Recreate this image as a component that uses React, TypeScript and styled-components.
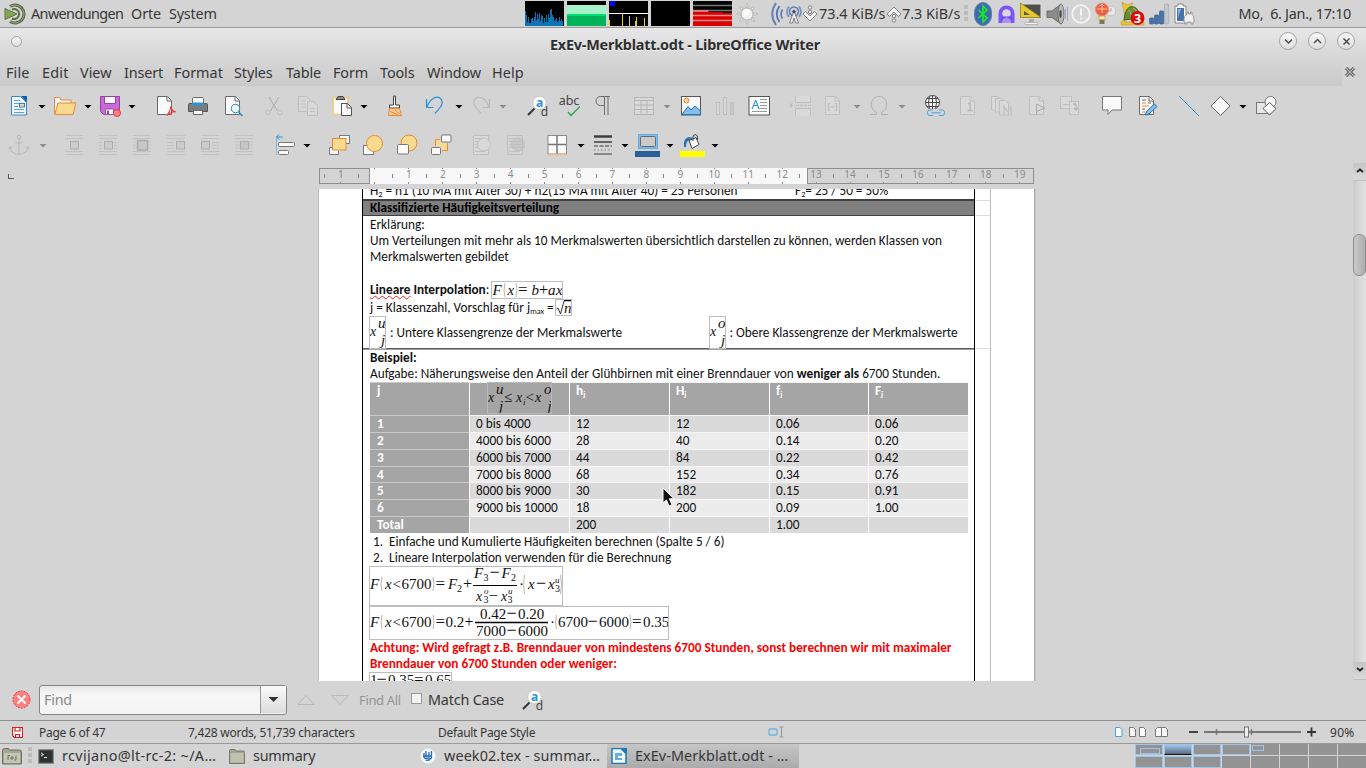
import React from 'react';
import styled, { createGlobalStyle, css } from 'styled-components';

const GlobalStyle = createGlobalStyle`
  * { box-sizing: border-box; }
  body { margin: 0; background: #d4d4d4; overflow: hidden; }
  svg { display: block; flex: none; }
`;

const Desktop = styled.div`
  width: 1366px;
  height: 768px;
  display: flex;
  flex-direction: column;
  background: #d4d4d4;
  color: #363636;
  font: 14.4px 'Noto Sans', sans-serif;
  overflow: hidden;
  position: relative;
`;

const Label = styled.span<{ $ls?: number; $ml?: number; $w?: number }>`
  white-space: pre;
  flex: none;
  letter-spacing: ${(p) => p.$ls ?? 0}px;
  margin-left: ${(p) => p.$ml ?? 0}px;
  ${(p) => p.$w && css`width: ${p.$w}px;`}
`;

const DimLabel = styled(Label)`
  color: #949494;
  font-size: 13px;
`;

const Slot = styled.div<{ $gap: number; $w?: number; $h?: number }>`
  flex: none;
  margin-left: ${(p) => p.$gap}px;
  width: ${(p) => p.$w ?? 22}px;
  height: ${(p) => p.$h ?? 22}px;
  display: flex;
  align-items: center;
  justify-content: center;
`;

/* ---------- desktop panel ---------- */

const Panel = styled.header`
  height: 28px;
  flex: none;
  display: flex;
  align-items: center;
  border-bottom: 1px solid #999;
`;

const Monitor = styled.div<{ $first?: boolean }>`
  flex: none;
  width: 39px;
  height: 25px;
  margin-left: ${(p) => (p.$first ? 307 : 3)}px;
  background: #000;
`;

const cpu = [15, 11, 4, 9, 3, 3, 7, 8, 5, 9, 14, 6, 12, 7, 13, 5, 11, 10, 3, 8, 4, 11, 4, 12, 8, 16, 17, 11, 9, 5, 6, 8, 4, 5, 9, 5, 7, 5];

const CpuGraph = () => (
  <svg width="39" height="25">
    {cpu.map((h, i) => <rect key={i} x={i} y={25 - h} width="1" height={h} fill="#0a74b8" />)}
  </svg>
);

const MateLogo = () => (
  <svg width="22" height="22" viewBox="0 0 22 22" fill="none">
    <path d="M6 3.500A9 9 0 1 1 6 18.500" stroke="#556b42" strokeWidth="3.2" />
    <path d="M6 3.500A9 9 0 1 1 6 18.500" stroke="#a9b79c" strokeWidth=".8" />
    <path d="M8 6.500A5 5 0 1 1 8 15.500" stroke="#556b42" strokeWidth="2" />
    <path d="M1 5.500L13 11L1 16.500z" fill="#87a556" stroke="#5a7541" />
  </svg>
);

const Sun = () => (
  <svg width="22" height="22" viewBox="0 0 22 22">
    {[0, 45, 90, 135, 180, 225, 270, 315].map((a) => (
      <path key={a} d="M11 .5L12.500 4h-3z" fill="#eee" stroke="#aaa" strokeWidth=".6" transform={`rotate(${a} 11 11)`} />
    ))}
    <circle cx="11" cy="11" r="6" fill="#f1f1ee" stroke="#b5b5b0" />
    <circle cx="10" cy="9.500" r="3" fill="#fff" />
  </svg>
);

const Waves = () => (
  <svg width="16" height="26" viewBox="0 0 16 26" fill="none" stroke="#5576ae">
    <path d="M6 2Q-1.500 13 6 24" strokeWidth="2" opacity=".85" />
    <path d="M9.500 5Q4 13 9.500 21" strokeWidth="1.800" />
    <path d="M12.500 8.500Q9.500 13 12.500 17.500" strokeWidth="1.600" />
  </svg>
);

const Antenna = () => (
  <svg width="18" height="22" viewBox="0 0 18 22" fill="none">
    <path d="M4 3.500Q0 9 4 14M14 3.500Q18 9 14 14" stroke="#7d95bd" strokeWidth="1.800" />
    <circle cx="9" cy="8.500" r="4.500" fill="#c5d0e4" stroke="#5a7cb4" strokeWidth="1.500" />
    <path d="M9 8L4.500 20h3L9 15l1.500 5h3z" fill="#eee" stroke="#777" strokeWidth=".9" />
    <circle cx="9" cy="8.500" r="1.600" fill="#444" />
  </svg>
);

const NetArrow = ({ up }: { up?: boolean }) => (
  <svg width="16" height="18" viewBox="0 0 16 18">
    <g transform={up ? 'rotate(180 8 9)' : undefined} fill="#f5f5f5" stroke="#777" strokeWidth=".9">
      <path d="M1 9l2.500-2.500L8 11l4.500-4.500L15 9l-7 7z" />
      <circle cx="8" cy="2.500" r="1.700" />
      <circle cx="8" cy="7" r="1.700" />
    </g>
  </svg>
);

const Grip = styled.div<{ $ml: number }>`
  flex: none;
  width: 4px;
  height: 18px;
  margin-left: ${(p) => p.$ml}px;
  background: repeating-linear-gradient(#bcbcbc 0 4px, transparent 4px 6px);
`;

const Bluetooth = () => (
  <svg width="18" height="24" viewBox="0 0 18 24">
    <rect x=".5" y=".5" width="17" height="23" rx="8.500" ry="10" fill="#3d6cad" stroke="#5f7fae" />
    <path d="M4.500 8l8.500 8-4 4V4l4 4-8.500 8" fill="none" stroke="#12f01b" strokeWidth="1.700" />
  </svg>
);

const VpnIcon = () => (
  <svg width="17" height="18" viewBox="0 0 17 18">
    <path d="M.5 8.500a8 8 0 0 1 16 0V18H.5z" fill="#7a55f2" />
    <circle cx="8.500" cy="8.500" r="4.300" fill="#d9d4e6" />
    <path d="M4 18q0-5 4.500-5t4.500 5z" fill="#a892f5" />
    <path d="M5 11.500h7l1.500 3a8 8 0 0 0-10 0z" fill="#6a45ea" />
  </svg>
);

const ScreenIcon = () => (
  <svg width="24" height="24" viewBox="0 0 24 24">
    <rect x="1" y="2" width="21" height="14.500" rx="1" fill="#4c4f4c" stroke="#ddd" />
    <rect x="10" y="17" width="5" height="3" fill="#aaa" />
    <path d="M6 20.500h13v2H6z" fill="#f4f4f4" stroke="#999" strokeWidth=".6" />
    <path d="M1.500 1v14.500H22z" fill="#e5c92e" stroke="#9b8616" strokeWidth=".8" />
    <path d="M5 9v4h6z" fill="#585a4e" />
  </svg>
);

const Speaker = () => (
  <svg width="24" height="24" viewBox="0 0 24 24">
    <path d="M2 9h5L16 2v20L7 15.500H2z" fill="#8b8d89" stroke="#5b5d5a" strokeWidth=".8" />
    <ellipse cx="16" cy="12" rx="3" ry="10" fill="#b9bab6" stroke="#666" strokeWidth=".8" />
    <ellipse cx="15.500" cy="12" rx="1.300" ry="4" fill="#555" />
    <path d="M20.500 7v10M22.500 5v14" stroke="#9aa6cc" strokeWidth=".9" />
  </svg>
);

const Notice = () => (
  <svg width="20" height="20" viewBox="0 0 20 20">
    <circle cx="10" cy="10" r="8.800" fill="none" stroke="#f4f4f4" strokeWidth="1.800" />
    <path d="M10 4.500v7M10 13.500v2" stroke="#f4f4f4" strokeWidth="2" />
  </svg>
);

const Bulb = () => (
  <svg width="22" height="24" viewBox="0 0 22 24">
    <circle cx="17" cy="9" r="4.800" fill="#e8e8e8" stroke="#c4c4c4" />
    <path d="M17 6v3h-2.500" stroke="#aaa" fill="none" />
    <circle cx="8" cy="7.500" r="6.500" fill="#f2603c" stroke="#d88" />
    <path d="M3 7h10M6 4l2-2 2 2M8 2v9" stroke="#ffc2b0" fill="none" />
    <path d="M5 14h6v3.500H5z" fill="#ffe9a0" stroke="#a68a40" strokeWidth=".6" />
    <path d="M5.500 18h5v4h-5z" fill="#777c5a" />
  </svg>
);

const Updates = () => (
  <svg width="25" height="25" viewBox="0 0 25 25">
    <path d="M2 1l5 3 6-2-5 6-1 8-3 5H24v3H1v-3l4-4z" fill="#e6c53a" stroke="#c49a1e" strokeWidth=".6" />
    <path d="M4 19Q5 6 12 5.500Q19 6 20 17z" fill="#6b8c38" stroke="#41631d" />
    <path d="M8 9q4 2 3 8M13 7q4 2 5 6" stroke="#a6bf66" fill="none" />
    <circle cx="17.500" cy="17" r="7" fill="#dd0a0a" />
    <text x="17.500" y="21.500" fontSize="12.500" fontWeight="bold" fontFamily="Noto Sans, sans-serif" textAnchor="middle" fill="#fff">3</text>
  </svg>
);

const Signal = () => (
  <svg width="21" height="22" viewBox="0 0 21 22">
    {[[0, 15, 6], [5, 12, 9], [10, 8, 13], [15, 1, 20]].map(([x, y, h]) => (
      <rect key={x} x={x + 0.5} y={y} width="4.200" height={h} rx="1" fill={x === 15 ? '#c3c6cb' : '#4673ac'} stroke={x === 15 ? '#a4a7ac' : '#3a5f92'} strokeWidth=".7" />
    ))}
  </svg>
);

const Battery = () => (
  <svg width="22" height="22" viewBox="0 0 22 22">
    <path d="M2 3h3V1h5v2h3v17H2z" fill="#fdfdfd" stroke="#888" />
    <rect x="4" y="5" width="7" height="13" fill="#4673ac" />
    <path d="M5 6h3l-3 9z" fill="#8db0dd" />
    <path d="M11 16q0-4 3-4.500V9h1.500v2h2V9H19v2.500q2 1 2 4.500v3h-1v2h-2v-2h-4v2h-2v-2h-1z" fill="#f0f0f0" stroke="#8a8a8a" strokeWidth=".8" />
  </svg>
);

/* ---------- window chrome ---------- */

const Chrome = styled.div`
  height: 58px;
  flex: none;
  background: linear-gradient(#e7e7e7, #d5d5d5 55%, #cacaca);
`;

const TitleBar = styled.div`
  height: 32px;
  display: flex;
  align-items: center;
`;

const Title = styled.div`
  width: 271px;
  margin: 1px 459px 0 505px;
  font-weight: bold;
  letter-spacing: -0.215px;
  white-space: nowrap;
  color: #2f2f2f;
  text-shadow: 0 1px #f4f4f4;
`;

const RoundButton = styled.div<{ $size: number; $ml: number }>`
  width: ${(p) => p.$size}px;
  height: ${(p) => p.$size}px;
  margin-left: ${(p) => p.$ml}px;
  margin-top: -6px;
  border: 1px solid #a4a4a4;
  border-radius: 50%;
  background: linear-gradient(#fafafa, #dcdcdc);
  flex: none;
  display: flex;
  align-items: center;
  justify-content: center;
`;

const MenuBar = styled.nav`
  height: 26px;
  display: flex;
  align-items: center;
  padding-bottom: 1px;
`;

const MenuClose = styled.div`
  width: 24px;
  margin-left: auto;
  height: 26px;
  background: #d4d4d4;
  display: flex;
  align-items: center;
  justify-content: center;
  padding: 0 8px 2px 0;
`;

const menus: [string, number, number][] = [
  ['File', 36, 0.12], ['Edit', 38, 0.2], ['View', 44, 0], ['Insert', 50, -0.15], ['Format', 60, 0],
  ['Styles', 52, -0.1], ['Table', 47, -0.1], ['Form', 47, -0.1], ['Tools', 47, -0.1], ['Window', 65, -0.1], ['Help', 40, 0.1],
];

/* ---------- toolbars ---------- */

const Toolbar = styled.div<{ $h: number; $pb?: number }>`
  height: ${(p) => p.$h}px;
  flex: none;
  display: flex;
  align-items: center;
  padding-bottom: ${(p) => p.$pb ?? 0}px;
`;

const Arrow = styled.i<{ $gap: number; $dim?: boolean }>`
  flex: none;
  margin: 1px 0 0 ${(p) => p.$gap}px;
  width: 8px;
  height: 4px;
  background: ${(p) => (p.$dim ? '#8c8c8c' : '#000')};
  clip-path: polygon(0 0, 100% 0, 50% 100%);
`;

const K = '#6b6b6b';
const D = '#bfbfbf';
const DF = '#d9d9d9';
const DocShape = ({ s = K, f = '#fafafa' }: { s?: string; f?: string }) => (
  <>
    <path d="M3.500 1.500h10l4 4v14h-14z" fill={f} stroke={s} />
    <path d="M13 1.500v4.500h4.500" fill="none" stroke={s} />
  </>
);
const Hatch = () => <path d="M2 1.500h18M2 4.500h18M2 17.500h18M2 20.500h18" stroke="#c1c1c1" />;

const art: Record<string, React.ReactNode> = {
  new: <>
    <path d="M3.500 1.500h9l6 6v12.500h-15z" fill="#eef6fc" stroke="#3f86c0" />
    <path d="M13 1h6v6.500z" fill="#0f5ea8" />
    <path d="M6 5.500h6M6 8.500h5M6 11.500h4M6 14.500h10M6 17.500h10" stroke="#5aa2d8" />
    <rect x="11.500" y="8.500" width="5" height="3.500" fill="#f2d3a5" stroke="#2f86c6" />
  </>,
  open: <>
    <path d="M.5 18.500V2.500h5l1.500 2.500h10v3" fill="#fafafa" stroke="#ed8733" />
    <path d="M.8 19.500L4 8h18l-3 11.500z" fill="#f8db8f" stroke="#ed8733" />
  </>,
  save: <>
    <path d="M1.500 1.500h19v18h-16l-3-3z" fill="#c76ad4" stroke="#9a3fa8" />
    <path d="M5.500 1.500h11v7h-11z" fill="#fafafa" stroke="#9a3fa8" />
    <path d="M6.500 14h8v5.500h-8z" fill="#fafafa" stroke="#9a3fa8" strokeWidth=".8" />
    <rect x="8" y="15.500" width="2" height="4" fill="#9a3fa8" />
    <circle cx="18" cy="18" r="3.500" fill="#ff8080" stroke="#e03a3a" />
  </>,
  pdf: <>
    <DocShape />
    <path d="M13 20.500Q17 16 16.500 11.500q1.500 5 5.500 5.500-4-1-9 3.500" stroke="#ee3a3a" fill="none" strokeWidth="1.100" />
  </>,
  print: <>
    <path d="M5.500 8V3.500q0-1 1-1h9q1 0 1 1V8" fill="#fafafa" stroke={K} />
    <path d="M1.500 9.500q0-1 1-1h17q1 0 1 1v7h-19z" fill="#7c7c7c" stroke="#555" />
    <rect x="5" y="7.500" width="12" height="2.500" fill="#2296dc" />
    <rect x="6.500" y="15.500" width="9" height="4" fill="#fafafa" stroke={K} />
  </>,
  preview: <>
    <DocShape />
    <path d="M16.500 17l4 4" stroke="#1e8bcd" strokeWidth="1.500" />
    <circle cx="13.500" cy="13.500" r="4.200" fill="#f4fafd" stroke="#1e8bcd" />
  </>,
  cut: <g fill="none" stroke="#ababab"><path d="M6 2l8.500 14M16 2L7.500 16" /><circle cx="5" cy="17.500" r="2.300" stroke="#c0c0c0" /><circle cx="17" cy="17.500" r="2.300" stroke="#c0c0c0" /></g>,
  copy: <g fill={DF} stroke={D}><path d="M1.500 1.500h8l4 4v11h-12z" /><path d="M4 6h5M4 9h5M4 12h5" /><path d="M10.500 6.500h6l4 4v10h-10z" /><path d="M13 13.500h5M13 16.500h5" /></g>,
  paste: <>
    <rect x="2" y="2.500" width="15" height="17" fill="#fafafa" stroke="#f1c58b" strokeWidth="1.600" />
    <path d="M5 4.500h9L12 1.500H7z" fill="#888" stroke="#444" />
    <path d="M10.500 8.500h6l4 4v8h-10z" fill="#fafafa" stroke="#555" />
    <path d="M16 8.500v4.500h4.500" fill="none" stroke="#555" />
  </>,
  brush: <>
    <path d="M10.500 1h2v9h4v3H6.500v-3h4z" fill="#fafafa" stroke="#444" />
    <path d="M6.500 13.500h10l2 7h-13z" fill="#f8cf9a" stroke="#ed8733" />
    <path d="M7 16.500l8 3M12 15l5 4" stroke="#ed8733" />
  </>,
  undo: <path d="M2.500 4v8.500h7M3 12C6 3 13 .5 16.500 3.500C21 8 16 13 11 18.500" fill="none" stroke="#2b90d9" strokeWidth="1.200" />,
  redo: <path d="M19.500 4v8.500h-7M19 12C16 3 9 .5 5.500 3.500C1 8 6 13 11 18.500" fill="none" stroke="#b9b9b9" strokeWidth="1.100" />,
  find: <>
    <path d="M8.500 13.500L2 20" stroke="#333" strokeWidth="2" />
    <circle cx="13.500" cy="8" r="6.800" fill="#fcfcfc" stroke="#c9c9c9" />
    <text x="13.500" y="12" fontSize="12" fontWeight="bold" fontFamily="Noto Sans, sans-serif" textAnchor="middle" fill="#3293d6">a</text>
    <text x="18.500" y="20.500" fontSize="12" fontFamily="Noto Sans, sans-serif" textAnchor="middle" fill="#444">d</text>
  </>,
  spell: <>
    <text x="11" y="10" fontSize="12.500" fontFamily="Noto Sans, sans-serif" textAnchor="middle" fill="#444">abc</text>
    <path d="M10 17l3 3.500 9-9" fill="none" stroke="#1ba34a" strokeWidth="1.200" />
  </>,
  pilcrow: <path d="M18 1.500H8.500a4.300 4.300 0 0 0 0 9H12M12.500 1.500V20M16 1.500V20" fill="none" stroke="#6d6d6d" />,
  table: <g fill={DF} stroke="#b5b5b5"><rect x="1.500" y="2.500" width="19" height="17" /><path d="M1.500 5.500h19M1.500 10h19M1.500 14.500h19M8 5.500v14M14 5.500v14" /></g>,
  image: <>
    <rect x="1.500" y="1.500" width="19" height="18.500" fill="#fafafa" stroke="#555" />
    <circle cx="6.500" cy="5.500" r="2.500" fill="#fbd595" stroke="#ed8733" />
    <path d="M2 19.500l6-8 3 3.500 4-4 5.500 5v3.500z" fill="#83beec" stroke="#1e76bb" />
  </>,
  chart: <g fill="#c8c8c8" stroke={D}><rect x="2.500" y="7.500" width="3" height="12" fill={DF} /><rect x="9.500" y="2.500" width="3" height="17" fill={DF} /><rect x="16.500" y="7.500" width="3" height="12" /></g>,
  textbox: <>
    <rect x="1" y="1.500" width="20.500" height="18.500" fill="#fafafa" stroke="#555" />
    <path d="M12 4.500h7M12 7.500h7M12 10.500h7M12 13.500h7M4 16.500h15" stroke="#999" />
    <text x="7.500" y="14" fontSize="12.500" fontFamily="Noto Sans, sans-serif" textAnchor="middle" fill="#2b90d9">A</text>
  </>,
  break: <g fill={DF} stroke={D}><path d="M5.500 1v6.500h15V1M5.500 20.500v-7h15v7" /><path d="M6 10.500h15" strokeDasharray="3 1" /><path d="M0 8.500l2.500 2-2.500 2z" fill={D} /></g>,
  field: <g><DocShape s={D} f={DF} /><path d="M8 8.500H6.500v7H8M13 8.500h1.500v7H13M8.500 12h4" fill="none" stroke={D} strokeWidth="1.200" /></g>,
  omega: <path d="M2 19.500h6.500v-2C0 13 2.500 1.500 11 1.500S22 13 13.500 17.500v2H20" fill="none" stroke="#b0b0b0" />,
  link: <>
    <circle cx="9.500" cy="7.500" r="7" fill="#fafafa" stroke="#444" />
    <path d="M2.500 7.500h14M9.500.5v14M4 3.500h11M4 11.500h11M6.500 1.500q-2 6 0 12M12.500 1.500q2 6 0 12" fill="none" stroke="#444" />
    <path d="M4 14h18v8H4z" fill="#d4d4d4" />
    <path d="M10 15H6.500q-2 0-2 2.750t2 2.750H10M16 15h3.500q2 0 2 2.750t-2 2.750H16M8.500 17.750h9" fill="none" stroke="#45a3e0" />
  </>,
  footnote: <g><DocShape s={D} f={DF} /><path d="M11 9l2-1.500V15M10.500 15.500h5" fill="none" stroke="#b8b8b8" strokeWidth="1.500" /></g>,
  endnote: <g fill={DF} stroke={D}><path d="M.5 1.500h6l3 3V15h-9z" /><path d="M4.500 3.500h6l3 3V17h-9z" /><path d="M8.500 5.500h6l3 3V20h-9z" /><path d="M13 21v-9.500l3.500 5 3.500-5V21" fill="none" stroke="#c4c4c4" strokeWidth="1.500" /></g>,
  bookmark: <g><DocShape s={D} f={DF} /><path d="M10.500 20V9l8.500 4-8.500 3.500" fill={DF} stroke="#aaa" /></g>,
  xref: <g fill={DF} stroke={D}><rect x="1.500" y="1.500" width="11" height="12" /><path d="M3.500 9.500h8" /><rect x="10.500" y="6.500" width="9" height="13" /><path d="M14 9h3v6M15 13l2 2.500 2-2.500" fill="none" stroke="#aaa" /></g>,
  comment: <path d="M1.500 1.500h19v13.500H11l-4 4.500V15H1.500z" fill="#fafafa" stroke="#777" />,
  track: <>
    <DocShape />
    <path d="M6 5h4M6 14h3M12 8h3" stroke="#666" /><path d="M6 8h4M6 11h7M6 17h4" stroke="#ed8733" />
    <path d="M9.500 20l1-3.500 8-7.500 2.500 2.500-8 7.500z" fill="#83beec" stroke="#1e76bb" />
  </>,
  line: <path d="M1 1l20 20" stroke="#2b90d9" />,
  diamond: <path d="M11.500 1.500l9.500 9.500-9.500 9.500L2 11z" fill="#fafafa" stroke="#666" />,
  shapes: <g stroke="#777" fill="#fafafa"><rect x="1.500" y="7.500" width="11" height="11" fill="#e6e6e6" /><circle cx="15.500" cy="7" r="5.500" /><path d="M14.500 7.500l6.500 6-6.500 6.500L8 13.500z" stroke="#555" /></g>,

  anchor: <g fill="none" stroke="#b8b8b8"><circle cx="11" cy="3" r="1.800" /><path d="M11 5v15M7.500 9h7M2 13l1 4q4 3.500 8 3.500t8-3.500l1-4M.5 15l1.500-2.500 2.500 2M21.500 15L20 12.500 17.500 14.500" /></g>,
  wrapNone: <><Hatch /><rect x="7.500" y="7.500" width="8" height="7.500" fill="#cbcbcb" stroke="#adadad" /></>,
  wrapPage: <><Hatch /><path d="M2 8.500h3M2 11.500h3M2 14.500h3M17 8.500h3M17 11.500h3M17 14.500h3" stroke="#c1c1c1" /><rect x="7.500" y="7.500" width="8" height="7.500" fill="#cbcbcb" stroke="#adadad" /></>,
  wrapOpt: <><Hatch /><path d="M2 8h3M2 11h3M2 14h3M17 8h3M17 11h3M17 14h3" stroke="#c1c1c1" /><rect x="6.500" y="6.500" width="10" height="9.500" fill="#c6c6c6" stroke="#ababab" strokeWidth="1.500" /></>,
  wrapLeft: <><Hatch /><path d="M2 8.500h7M2 11.500h7M2 14.500h7" stroke="#c1c1c1" /><rect x="11.500" y="7.500" width="8" height="7.500" fill="#cbcbcb" stroke="#adadad" /></>,
  wrapRight: <><Hatch /><path d="M13 8.500h7M13 11.500h7M13 14.500h7" stroke="#c1c1c1" /><rect x="2.500" y="7.500" width="8" height="7.500" fill="#cbcbcb" stroke="#adadad" /></>,
  wrapThrough: <><Hatch /><path d="M2 8h18M2 11h18M2 14h18" stroke="#c1c1c1" /><rect x="7.500" y="7.500" width="8" height="7.500" fill="#c6c6c6" stroke="#adadad" /></>,
  align: <>
    <path d="M2.500 4v17" stroke="#7cb9e6" /><path d="M8.500 3h-6M5 .5L2.500 3 5 5.500" fill="none" stroke="#2b90d9" />
    <rect x="4.500" y="8.500" width="16" height="4" rx="1" fill="#fafafa" stroke="#777" /><rect x="4.500" y="16.500" width="10" height="4" rx="1" fill="#fafafa" stroke="#777" />
  </>,
  toFront: <><path d="M11.500 5V1.500h10v8H17M5 13.500H1.500v7h9V17" fill="#fafafa" stroke="#777" /><rect x="4.500" y="4.500" width="13.500" height="11.500" fill="#f8db8f" stroke="#e8892f" /></>,
  forward: <><rect x="1.500" y="11.500" width="10" height="9" fill="#fafafa" stroke="#777" /><circle cx="12.500" cy="9.500" r="8" fill="#f8db8f" stroke="#e8892f" /></>,
  backward: <><circle cx="13" cy="9" r="8" fill="#f8db8f" stroke="#e8892f" /><rect x="1.500" y="10.500" width="11" height="9.500" rx="1" fill="#fafafa" stroke="#777" /></>,
  toBack: <><path d="M5.500 5.500h12v11h-12z" fill="#f8db8f" stroke="#e8892f" /><rect x="10" y="0" width="12" height="9" fill="#d4d4d4" /><rect x="0" y="12" width="12" height="10" fill="#d4d4d4" /><rect x="11.500" y="1" width="9.500" height="7" rx="1" fill="#fafafa" stroke="#777" /><rect x="1.500" y="13.500" width="9" height="7" rx="1" fill="#fafafa" stroke="#777" /></>,
  foreground: <g fill={DF} stroke={D}><rect x="2.500" y="1.500" width="15" height="19" /><path d="M4 4.500h8M4 7.500h4M4 10.500h4M4 13.500h4M4 17.500h10" /><circle cx="13" cy="10.500" r="6.500" /></g>,
  background: <g fill={DF} stroke={D}><circle cx="13" cy="10.500" r="6.500" fill="#c8c8c8" /><path d="M2.500 1.500h15v19h-15z" fill="none" /><path d="M4 4.500h12M4 7.500h14M4 10.500h14M4 13.500h14M4 17.500h11" /></g>,
  borders: <><rect x="2" y="1.500" width="18.500" height="18.500" fill="#fafafa" stroke="#8a8a8a" /><path d="M11 2v18M2 10.500h18" stroke="#777" strokeWidth="1.500" /><path d="M1.500 20.500h19" stroke="#f1b98d" strokeWidth="1.500" /></>,
  lineStyle: <g stroke="#3f3f3f"><path d="M2 2.500h18" strokeWidth="2.500" /><path d="M2 8h18" strokeWidth="1.500" /><path d="M2 12h18" strokeDasharray="4 1.500" /><path d="M2 16h18" strokeDasharray="1.500 2" stroke="#888" /><path d="M2 20h18" /></g>,
};

const Picto = ({ n }: { n: string }) => <svg width="22" height="22" viewBox="0 0 22 22">{art[n]}</svg>;

type Tool = [string, number];
const standard: Tool[] = [
  ['new', 8], ['v', 8], ['open', 8], ['v', 8], ['save', 7], ['v', 7], ['pdf', 18], ['print', 11], ['preview', 13], ['cut', 19],
  ['copy', 12], ['paste', 12], ['v', 7], ['brush', 15], ['undo', 19], ['v', 9], ['redo', 7], ['-', 7], ['find', 19], ['spell', 10],
  ['pilcrow', 12], ['table', 19], ['-', 8], ['image', 9], ['chart', 12], ['textbox', 12], ['break', 20], ['field', 10], ['-', 9],
  ['omega', 7], ['-', 8], ['link', 17], ['footnote', 12], ['endnote', 12], ['bookmark', 13], ['xref', 11], ['comment', 20],
  ['track', 13], ['line', 20], ['diamond', 9], ['v', 8], ['shapes', 8],
];
const drawing: Tool[] = [
  ['anchor', 8], ['-', 9], ['wrapNone', 16], ['wrapPage', 12], ['wrapOpt', 12], ['wrapLeft', 12], ['wrapRight', 12], ['wrapThrough', 12],
  ['align', 19], ['v', 7], ['toFront', 17], ['forward', 12], ['backward', 12], ['toBack', 12], ['foreground', 19], ['background', 12],
  ['borders', 19], ['v', 9], ['lineStyle', 7], ['v', 7],
];

const Tools = ({ items }: { items: Tool[] }) => (
  <>
    {items.map(([n, gap], i) =>
      n === 'v' || n === '-' ? <Arrow key={i} $gap={gap} $dim={n === '-'} /> : <Slot key={i} $gap={gap}><Picto n={n} /></Slot>,
    )}
  </>
);

/* ---------- ruler ---------- */

const RulerRow = styled.div`
  height: 21px;
  flex: none;
  display: flex;
  padding-left: 8px;
`;

const TabMarker = styled.div`
  width: 6px;
  height: 5px;
  margin: 6px 305px 0 0;
  border-left: 1.5px solid #555;
  border-bottom: 1.5px solid #555;
`;

const Ruler = styled.div`
  position: relative;
  width: 715px;
  height: 16px;
  display: flex;
  padding-left: 5px;
  overflow: hidden;
  background: linear-gradient(to right, #d4d4d4 51px, #f8f8f8 51px 488px, #d4d4d4 488px);
  font-size: 10px;
  color: #8b8b8b;
`;

const RulerCell = styled.div`
  flex: none;
  width: 33.95px;
  height: 16px;
  line-height: 13px;
  text-align: center;
  background:
    linear-gradient(#888, #888) 0 6px / 1px 4px no-repeat,
    linear-gradient(#888, #888) 50% 0 / 1px 1px no-repeat,
    linear-gradient(#888, #888) 50% 100% / 1px 2px no-repeat;
`;

const RulerFrame = styled.div<{ $x: number; $w: number }>`
  position: absolute;
  left: ${(p) => p.$x}px;
  top: 0;
  width: ${(p) => p.$w}px;
  height: 16px;
  border: 1px solid #8e8e8e;
`;

/* ---------- document ---------- */

const Workspace = styled.main`
  height: 492px;
  flex: none;
  display: flex;
  position: relative;
`;

const Page = styled.article`
  width: 717px;
  height: 492px;
  margin-left: 318px;
  border-left: 1px solid #bdbdbd;
  border-right: 1px solid #a8a8a8;
  box-shadow: 1px 0 #c4c4c4;
  background: #fff;
  color: #111;
  font: 13.25px/16px Carlito, Calibri, Lato, sans-serif;
  display: flex;
  overflow: hidden;
`;

const Body = styled.div`
  width: 613px;
  margin-left: 43px;
  border: solid #000;
  border-width: 0 1px;
  flex: none;
`;

const MarginStrip = styled.div`
  width: 16px;
  border-right: 1px solid #bdbdbd;
  flex: none;
  background:
    linear-gradient(#dedede, #dedede) 0 11px / 100% 1px no-repeat,
    linear-gradient(#dedede, #dedede) 0 26px / 100% 1px no-repeat,
    linear-gradient(#dedede, #dedede) 0 159px / 100% 1px no-repeat;
`;

const Line = styled.p<{ $h?: number; $top?: number; $red?: boolean }>`
  margin: 0;
  height: ${(p) => p.$h ?? 16}px;
  padding: ${(p) => p.$top ?? 0}px 0 0 7px;
  white-space: nowrap;
  display: flex;
  ${(p) => p.$red && css`color: #f80404; font-weight: bold;`}
`;

const Heading = styled.h2`
  margin: 0;
  height: 17px;
  padding-left: 7px;
  background: #808080;
  border-top: 2px solid #3f3f3f;
  border-bottom: 1px solid #3f3f3f;
  font-size: 13.25px;
  line-height: 14px;
  color: #000;
`;

const Run = styled.span<{ $ml?: number; $mt?: number }>`
  white-space: pre;
  margin-left: ${(p) => p.$ml ?? 0}px;
  margin-top: ${(p) => p.$mt ?? 0}px;
`;

const Sub = styled.sub`
  font-size: 8.2px;
  line-height: 0;
  vertical-align: -2px;
`;

const Misspelt = styled.span`
  text-decoration: underline wavy #f02020 1.2px;
  text-underline-offset: 1px;
  text-decoration-skip-ink: none;
`;

const Rule = styled.div`
  height: 2px;
  background: linear-gradient(#5a5a5a 50%, #a0a0a0 50%);
`;

const Freq = styled.div`
  margin: 0 0 0 7px;
  width: 599px;
  display: grid;
  grid-template-columns: 100px 100px 100px 100px 99px 100px;
  grid-template-rows: 33px 17px 17px 17px 16px 17px 17px 17px;
`;

const Cell = styled.div<{ $tone: 'head' | 'odd' | 'even'; $first?: boolean }>`
  background: ${(p) => ({ head: '#a5a5a5', odd: '#dadada', even: '#ececec' })[p.$tone]};
  color: ${(p) => (p.$tone === 'head' ? '#fff' : '#111')};
  font-weight: ${(p) => (p.$tone === 'head' ? 'bold' : 'normal')};
  border-right: 1px solid #fff;
  border-top: 1px solid ${(p) => (p.$first ? '#c9c9c9' : '#f4f4f4')};
  padding-left: ${(p) => (p.$first ? 7 : 6)}px;
  line-height: 15px;
`;

const rows = [
  ['1', '0 bis 4000', '12', '12', '0.06', '0.06'],
  ['2', '4000 bis 6000', '28', '40', '0.14', '0.20'],
  ['3', '6000 bis 7000', '44', '84', '0.22', '0.42'],
  ['4', '7000 bis 8000', '68', '152', '0.34', '0.76'],
  ['5', '8000 bis 9000', '30', '182', '0.15', '0.91'],
  ['6', '9000 bis 10000', '18', '200', '0.09', '1.00'],
  ['Total', '', '200', '', '1.00', ''],
];

const MathObject = styled.svg<{ $ml?: number; $mt?: number; $dark?: boolean }>`
  margin-left: ${(p) => p.$ml ?? 0}px;
  margin-top: ${(p) => p.$mt ?? 0}px;
  outline: 1px solid ${(p) => (p.$dark ? '#b9b9b9' : '#bdbdbd')};
  outline-offset: -1px;
  font-family: 'Liberation Serif', serif;
  font-weight: normal;
  font-size: 15px;
  fill: #111;
`;

/* text, x, baseline, face (i = italic, r = upright), size */
type Glyph = [string, number, number, string?, number?];
const Glyphs = ({ g }: { g: Glyph[] }) => (
  <>
    {g.map(([t, x, y, k = 'i', s = 15], i) => (
      <text key={i} x={x} y={y} fontSize={s} fontStyle={k === 'i' ? 'italic' : 'normal'}>{t}</text>
    ))}
  </>
);
const Bracket = ({ x, y, h, r }: { x: number; y: number; h: number; r?: boolean }) => (
  <path d={r ? `M${x} ${y}q2 ${h / 2} 0 ${h}` : `M${x} ${y}q-2 ${h / 2} 0 ${h}`} fill="none" stroke="#b9aca4" strokeWidth=".9" />
);

/* ---------- scrollbar ---------- */

const ScrollBar = styled.div`
  width: 13px;
  height: 517px;
  position: absolute;
  right: 0;
  top: -26px;
  display: flex;
  flex-direction: column;
  background: linear-gradient(to right, #cdcdcd, #e2e2e2);
`;

const ScrollButton = styled.div`
  height: 18px;
  background: linear-gradient(#c4c4c4, #dadada);
  border-bottom: 1px solid #c0c0c0;
  display: flex;
  align-items: center;
  justify-content: center;
  padding-bottom: 2px;
`;

const Thumb = styled.div`
  height: 42px;
  margin: 53px 0 auto;
  border: 1px solid #8d8d8d;
  border-radius: 6px;
  background: linear-gradient(to right, #c9c9c9, #adadad);
`;

/* ---------- find bar, status bar, taskbar ---------- */

const FindBar = styled.div`
  height: 39px;
  flex: none;
  display: flex;
  align-items: center;
  padding-bottom: 2px;
`;

const FindField = styled.div`
  width: 248px;
  height: 30px;
  margin-left: 8px;
  border: 1.5px solid #858585;
  border-radius: 3px;
  background: linear-gradient(#e6e6e6, #f7f7f7 30%, #f4f4f4);
  display: flex;
  align-items: center;
  color: #8b8b8b;
`;

const DropButton = styled.div`
  margin-left: auto;
  width: 26px;
  height: 27px;
  border-left: 1px solid #999;
  background: linear-gradient(#fbfbfb, #dcdcdc);
  display: flex;
  align-items: center;
  justify-content: center;
`;

const Drop = styled.i`
  width: 10px;
  height: 5px;
  background: #333;
  clip-path: polygon(0 0, 100% 0, 50% 100%);
`;

const CheckBox = styled.div`
  width: 11px;
  height: 11px;
  margin: -3px 0 0 11px;
  border: 1px solid #999;
  background: #f4f4f4;
`;

const StatusBar = styled.div`
  height: 23px;
  flex: none;
  border-top: 1px solid #8e8e8e;
  display: flex;
  align-items: center;
  font-size: 12px;
`;

const TaskBar = styled.footer`
  height: 25px;
  flex: none;
  border-top: 1px solid #999;
  display: flex;
  align-items: center;
`;

const TaskTitle = styled(Label)`
  margin-top: -2px;
`;

const ActiveTask = styled.div`
  width: 192px;
  height: 24px;
  margin-left: 7px;
  padding-left: 4px;
  background: linear-gradient(#c6c6c6, #ababab);
  display: flex;
  align-items: center;
`;

const Pager = styled.div`
  margin-left: auto;
  width: 231px;
  height: 24px;
  display: grid;
  grid-template-columns: repeat(8, 28px);
  grid-template-rows: 11px 12px;
  gap: 1px;
`;

const Desk = styled.div<{ $on?: boolean; $win?: boolean }>`
  background: ${(p) => (p.$on ? 'linear-gradient(#9fc4ea, #5b6c80)' : '#939393')};
  ${(p) => p.$win && css`border: 1px solid #9fc4ee;`}
  ${(p) => p.$on && css`border-bottom: 1px solid #111;`}
  display: flex;
`;

const MiniWindow = styled.div<{ $l: number; $t: number; $w: number }>`
  margin: ${(p) => p.$t}px 0 0 ${(p) => p.$l}px;
  width: ${(p) => p.$w}px;
  height: 6px;
  border: 1px solid #9fc4ee;
`;

const Cursor = styled.svg`
  position: absolute;
  left: 662px;
  top: 487px;
`;

export default function App() {
  return (
    <Desktop>
      <GlobalStyle />
      <Panel>
        <Slot $gap={4}><MateLogo /></Slot>
        <Label $ml={5} $w={100} $ls={-0.6}>Anwendungen</Label>
        <Label $w={38} $ls={-0.1}>Orte</Label>
        <Label $w={49} $ls={-0.2}>System</Label>
        <Monitor $first><CpuGraph /></Monitor>
        <Monitor>
          <svg width="39" height="25"><path d="M0 4h39v10H0z" fill="#a6f3cb" /><path d="M0 13h39v2H0z" fill="#00e070" /><path d="M0 15h39v10H0z" fill="#00b35a" /></svg>
        </Monitor>
        <Monitor>
          <svg width="39" height="25"><path d="M0 12h39v1H0z" fill="#fff" /><path d="M1 0h5v5H1z" fill="#00f" /><path d="M.5 19v6M13.500 12v13M20.500 15v10M26.500 20v5M27.500 16v9M35.500 17v8" stroke="#e5d024" /></svg>
        </Monitor>
        <Monitor />
        <Monitor>
          <svg width="39" height="25"><path d="M0 10h16v1h14v1h9v13H0z" fill="#d90000" /><path d="M0 4.500h39M0 9.500h39" stroke="#777" strokeWidth="1.500" /><path d="M0 10h15M0 14.500h39M0 19.500h39" stroke="#ef8a8a" strokeWidth="1.500" /></svg>
        </Monitor>
        <Slot $gap={4}><Sun /></Slot>
        <Slot $gap={12} $w={16} $h={26}><Waves /></Slot>
        <Slot $gap={-1} $w={18}><Antenna /></Slot>
        <Slot $gap={-1} $w={16}><NetArrow /></Slot>
        <Label $ml={1} $w={68}>73.4 KiB/s</Label>
        <Slot $gap={-1} $w={16}><NetArrow up /></Slot>
        <Label $w={60}>7.3 KiB/s</Label>
        <Grip $ml={2} />
        <Slot $gap={6} $w={18} $h={24}><Bluetooth /></Slot>
        <Slot $gap={6} $w={17}><VpnIcon /></Slot>
        <Slot $gap={4} $w={24}><ScreenIcon /></Slot>
        <Slot $gap={2} $w={24}><Speaker /></Slot>
        <Slot $gap={2} $w={20}><Notice /></Slot>
        <Slot $gap={3}><Bulb /></Slot>
        <Slot $gap={4} $w={25}><Updates /></Slot>
        <Slot $gap={4} $w={21}><Signal /></Slot>
        <Slot $gap={3}><Battery /></Slot>
        <Label $ml={43.5} $ls={-0.29}>Mo,  6. Jan., 17:10</Label>
      </Panel>

      <Chrome>
        <TitleBar>
          <RoundButton $size={11} $ml={11} />
          <Label $w={23} />
          <Title>ExEv-Merkblatt.odt - LibreOffice Writer</Title>
          {['M2 3.500L5.500 7 9 3.500', 'M2 7L5.500 3.500 9 7', 'M2.500 2.500l6 6M8.500 2.500l-6 6'].map((d, i) => (
            <RoundButton key={d} $size={18} $ml={i ? 11 : -1}>
              <svg width="11" height="11"><path d={d} fill="none" stroke="#4a4a4a" strokeWidth="1.500" /></svg>
            </RoundButton>
          ))}
        </TitleBar>
        <MenuBar>
          <Label $w={6} />
          {menus.map(([t, w, ls]) => <Label key={t} $w={w} $ls={ls}>{t}</Label>)}
          <MenuClose>
            <svg width="12" height="12"><path d="M2 2l8 8M10 2l-8 8" stroke="#777" strokeWidth="3.500" /><path d="M2 2l8 8M10 2l-8 8" stroke="#bbb" strokeWidth="1" /></svg>
          </MenuClose>
        </MenuBar>
      </Chrome>

      <Toolbar $h={40}><Tools items={standard} /></Toolbar>
      <Toolbar $h={42} $pb={4}>
        <Tools items={drawing} />
        <Slot $gap={6} $w={25} $h={24}>
          <svg width="25" height="24"><rect x="3.500" y="1.500" width="19" height="14" fill="#83beec" stroke="#62a9dd" /><rect x="5.500" y="3.500" width="15" height="10" rx="1" fill="#c9c9c9" stroke="#666" /><path d="M0 18h25v6H0z" fill="#2a6099" /></svg>
        </Slot>
        <Arrow $gap={6} />
        <Slot $gap={6} $w={25} $h={24}>
          <svg width="25" height="24"><path d="M4 14Q3 5 9 4l4 1-5 3q-2 1-2 6z" fill="#1e76bb" /><path d="M9 7.500l7-3 3 7-7 4z" fill="#fafafa" stroke="#444" /><path d="M13 8V3q2-3 4.500 0v4" fill="none" stroke="#444" /><path d="M0 18h25v6H0z" fill="#ff0" /></svg>
        </Slot>
        <Arrow $gap={6} />
      </Toolbar>

      <RulerRow>
        <TabMarker />
        <Ruler>
          {['1', '', ...Array.from({ length: 19 }, (_, i) => String(i + 1))].map((n, i) => <RulerCell key={i}>{n}</RulerCell>)}
          <RulerFrame $x={0} $w={51} />
          <RulerFrame $x={488} $w={227} />
        </Ruler>
      </RulerRow>

      <Workspace>
        <Page>
          <Body>
            <Line $h={10}>
              <Run $mt={-6}>H<Sub>2</Sub> = h1 (10 MA mit Alter 30) + h2(15 MA mit Alter 40) = 25 Personen</Run>
              <Run $ml={57.5} $mt={-6}>F<Sub>2</Sub>= 25 / 50 = 50%</Run>
            </Line>
            <Heading>Klassifizierte Häufigkeitsverteilung</Heading>
            <Line $h={17} $top={1}>Erklärung:</Line>
            <Line>Um Verteilungen mit mehr als 10 Merkmalswerten übersichtlich darstellen zu können, werden Klassen von</Line>
            <Line $h={32}>Merkmalswerten gebildet</Line>
            <Line $h={18}>
              <Run $mt={1}><b><Misspelt>Lineare</Misspelt> Interpolation</b>:</Run>
              <MathObject width="72" height="18" $ml={2}>
                <Glyphs g={[['F', 1.5, 14], ['x', 16.5, 14], ['=', 27, 14, 'r', 17], ['b', 40.5, 14], ['+', 48, 14, 'r', 16], ['a', 57, 14], ['x', 65, 14]]} />
                <Bracket x={14} y={2} h={14} /><Bracket x={25} y={2} h={14} r />
              </MathObject>
            </Line>
            <Line $h={17}>
              <Run $mt={1}>j = Klassenzahl, Vorschlag für j<Sub>max</Sub> =</Run>
              <MathObject width="17" height="17" $ml={1}>
                <path d="M1.500 10l1.500-1 2.500 6L9 2" fill="none" stroke="#333" /><path d="M9 1.500h7" stroke="#000" strokeWidth="1.500" />
                <Glyphs g={[['n', 9, 14]]} />
              </MathObject>
            </Line>
            <Line $h={32}>
              <MathObject width="17" height="33" $ml={-1}><Glyphs g={[['x', 1, 20, 'i', 14], ['u', 9, 12], ['j', 12, 29]]} /></MathObject>
              <Run $mt={9} $ml={4}>: Untere Klassengrenze der Merkmalswerte</Run>
              <MathObject width="17" height="33" $ml={86.5}><Glyphs g={[['x', 1, 20, 'i', 14], ['o', 9, 12], ['j', 12, 29]]} /></MathObject>
              <Run $mt={9} $ml={4}>: Obere Klassengrenze der Merkmalswerte</Run>
            </Line>
            <Rule />
            <Line><b>Beispiel:</b></Line>
            <Line>
              <Run>Aufgabe: Näherungsweise den Anteil der Glühbirnen mit einer Brenndauer von <b>weniger als</b> 6700 Stunden.</Run>
            </Line>
            <Freq>
              <Cell $tone="head" $first>j</Cell>
              <Cell $tone="head">
                <MathObject width="65" height="32" $ml={11} $mt={-1} $dark>
                  <Glyphs g={[['x', 1, 20, 'i', 14], ['u', 9, 12], ['j', 12, 29], ['≤', 17, 20, 'r', 15], ['x', 29, 20, 'i', 14], ['i', 36, 23, 'i', 9], ['<', 38.5, 20, 'r', 15], ['x', 48, 20, 'i', 14], ['o', 57, 12], ['j', 60.5, 29]]} />
                </MathObject>
              </Cell>
              {['h', 'H', 'f', 'F'].map((s) => <Cell key={s} $tone="head">{s}<Sub>j</Sub></Cell>)}
              {rows.map((r, y) => r.map((t, x) => (
                <Cell key={`${y}-${x}`} $tone={x === 0 ? 'head' : y % 2 ? 'even' : 'odd'} $first={x === 0}>{t}</Cell>
              )))}
            </Freq>
            <Line $h={17} $top={1}><Run $ml={3}>1.</Run><Run $ml={6}>Einfache und Kumulierte Häufigkeiten berechnen (Spalte 5 / 6)</Run></Line>
            <Line><Run $ml={3}>2.</Run><Run $ml={6}>Lineare Interpolation verwenden für die Berechnung</Run></Line>
            <Line $h={40}>
              <MathObject width="194" height="40" $ml={-1}>
                <Glyphs g={[['F', 1, 23], ['x', 16, 23], ['<', 23.5, 23, 'r'], ['6700', 32.5, 23, 'r'], ['=', 66.5, 23, 'r', 17], ['F', 79, 23], ['2', 88, 26, 'r', 10], ['+', 94, 23, 'r', 16],
                  ['F', 105, 12], ['3', 114.5, 15, 'r', 10], ['−', 120.5, 12, 'r', 18], ['F', 132.5, 12], ['2', 142, 15, 'r', 10],
                  ['x', 107, 35, 'i', 14], ['o', 115, 28, 'i', 9], ['3', 114.5, 37, 'r', 10], ['−', 119.5, 35, 'r', 17], ['x', 132, 35, 'i', 14], ['u', 139, 28, 'i', 9], ['3', 138.5, 37, 'r', 10],
                  ['·', 150, 23, 'r'], ['x', 159, 23, 'i', 15], ['−', 167, 23, 'r', 18], ['x', 179, 23, 'i', 15], ['u', 186, 17, 'i', 9], ['3', 186, 26, 'r', 10]]} />
                <path d="M104 19.500h44" stroke="#000" />
                <Bracket x={13} y={11} h={14} /><Bracket x={64} y={11} h={14} r /><Bracket x={155.5} y={9} h={19} /><Bracket x={191.5} y={9} h={19} r />
              </MathObject>
            </Line>
            <Line $h={34}>
              <MathObject width="300" height="34" $ml={-1}>
                <Glyphs g={[['F', 1, 21], ['x', 16, 21], ['<', 23.5, 21, 'r'], ['6700', 32.5, 21, 'r'], ['=', 66.5, 21, 'r', 17], ['0.2', 76.5, 21, 'r'], ['+', 95.5, 21, 'r', 16],
                  ['0.42', 111, 13, 'r'], ['−', 137.5, 13, 'r', 18], ['0.20', 149, 13, 'r'], ['7000', 107, 30, 'r'], ['−', 137.5, 30, 'r', 18], ['6000', 149, 30, 'r'],
                  ['·', 181, 21, 'r'], ['6700', 189, 21, 'r'], ['−', 218.5, 21, 'r', 18], ['6000', 230, 21, 'r'], ['=', 263, 21, 'r', 17], ['0.35', 274, 21, 'r']]} />
                <path d="M106 16.500h73" stroke="#000" strokeWidth="1.500" />
                <Bracket x={13} y={9} h={14} /><Bracket x={64} y={9} h={14} r /><Bracket x={187.5} y={9} h={14} /><Bracket x={261} y={9} h={14} r />
              </MathObject>
            </Line>
            <Line $red>Achtung: Wird gefragt z.B. Brenndauer von mindestens 6700 Stunden, sonst berechnen wir mit maximaler</Line>
            <Line $red>Brenndauer von 6700 Stunden oder weniger:</Line>
            <Line $h={10}>
              <MathObject width="83" height="17" $ml={-1}><Glyphs g={[['1', 1, 13, 'r'], ['−', 7.5, 13, 'r', 18], ['0.35', 19, 13, 'r'], ['=', 45, 13, 'r', 17], ['0.65', 56, 13, 'r']]} /></MathObject>
            </Line>
          </Body>
          <MarginStrip />
        </Page>
        <ScrollBar>
          <ScrollButton><svg width="8" height="5"><path d="M1 4l3-2.500L7 4" fill="none" stroke="#222" strokeWidth="1.800" /></svg></ScrollButton>
          <Thumb />
          <ScrollButton><svg width="8" height="5"><path d="M1 1l3 2.500L7 1" fill="none" stroke="#222" strokeWidth="1.800" /></svg></ScrollButton>
        </ScrollBar>
      </Workspace>

      <FindBar>
        <Slot $gap={12} $w={19}>
          <svg width="19" height="19"><circle cx="9.500" cy="9.500" r="8.500" fill="#ff8080" stroke="#e03a3a" strokeDasharray="2 1" /><path d="M5.500 5.500l8 8M13.500 5.500l-8 8" stroke="#fafafa" strokeWidth="2" /></svg>
        </Slot>
        <FindField><Label $ml={4} $ls={-0.25}>Find</Label><DropButton><Drop /></DropButton></FindField>
        <Slot $gap={8}><svg width="20" height="12"><path d="M1.500 10.500L10 1.500l8.500 9z" fill="none" stroke="#b9b9b9" /></svg></Slot>
        <Slot $gap={12}><svg width="20" height="12"><path d="M1.500 1.500h17L10 10.500z" fill="none" stroke="#b9b9b9" /></svg></Slot>
        <DimLabel $ml={8} $w={41} $ls={-0.34}>Find All</DimLabel>
        <CheckBox />
        <Label $ml={6} $w={78} $ls={-0.2}>Match Case</Label>
        <Slot $gap={15}><Picto n="find" /></Slot>
      </FindBar>

      <StatusBar>
        <Slot $gap={11} $w={12}>
          <svg width="11" height="11"><path d="M.5.5h10v10h-8l-2-2z" fill="#fff" stroke="#d81e1e" strokeWidth="1.200" /><path d="M3 1v3h5V1M3.500 10.500v-3h4v3" fill="none" stroke="#d81e1e" strokeWidth="1.200" /></svg>
        </Slot>
        <Label $ml={16} $w={149} $ls={-0.25}>Page 6 of 47</Label>
        <Label $w={250} $ls={-0.25}>7,428 words, 51,739 characters</Label>
        <Label $w={98} $ls={-0.3}>Default Page Style</Label>
        <Slot $gap={232} $w={17}>
          <svg width="17" height="12"><rect x="1" y="3" width="8" height="6" rx="1" fill="none" stroke="#6fb3e4" strokeWidth="1.300" /><path d="M11.500 1h4M13.500 1v10M11.500 11h4" stroke="#999" /></svg>
        </Slot>
        <Slot $gap={329} $w={58}>
          <svg width="58" height="12" fill="#fafafa" stroke="#777"><path d="M1.500 1.500h4.500l2 2v7h-6.500z" stroke="#45a3e0" /><path d="M15.500 1.500h4l2 2v7h-6zM25.500 1.500h4l2 2v7h-6zM41.500 3.500l2-2h4v9h-6zM47.500 1.500h4l2 2v7h-6z" /></svg>
        </Slot>
        <Slot $gap={17} $w={128}>
          <svg width="128" height="14" stroke="#777"><path d="M0 7h9" stroke="#333" strokeWidth="1.800" /><path d="M15 7h97" strokeWidth="2" /><path d="M27.500 4v6M62.500 4v6" strokeWidth="1.500" /><rect x="55.500" y="2" width="4" height="10" fill="#eee" /><path d="M118 7h9M122.500 2.500v9" stroke="#333" strokeWidth="1.800" /></svg>
        </Slot>
        <Label $ml={13} $ls={0.3}>90%</Label>
      </StatusBar>

      <TaskBar>
        <Slot $gap={2} $w={20}>
          <svg width="20" height="18"><path d="M.5 3.500q0-2 2-2h4l1 1.500h10q2 0 2 2v12H.5z" fill="#a4a692" stroke="#6e705e" /><path d="M2 6h16v10H2z" fill="#c4c6b5" /><path d="M6 13V8.500h2M14 8.500V13h-2M9 10h2v2H9z" fill="none" stroke="#6e705e" /></svg>
        </Slot>
        <Grip $ml={6} />
        <Slot $gap={6} $w={16}>
          <svg width="16" height="15"><rect x=".5" y=".5" width="15" height="14" fill="#2c3331" stroke="#8b8d89" strokeWidth="1.500" /><path d="M3 4l2.500 1.500L3 7M6 8.500h3" fill="none" stroke="#fff" /></svg>
        </Slot>
        <TaskTitle $ml={8} $w={167} $ls={0.34}>rcvijano@lt-rc-2: ~/A…</TaskTitle>
        <Slot $gap={0} $w={16}>
          <svg width="16" height="16"><path d="M.5 3q0-1.500 1.500-1.500h4l1 1.500h7q1.500 0 1.500 1.500v11H.5z" fill="#a4a692" stroke="#77796a" /><path d="M1.500 5h13v9.500h-13z" fill="#bfc1ae" /></svg>
        </Slot>
        <TaskTitle $ml={8} $w={167} $ls={-0.25}>summary</TaskTitle>
        <Slot $gap={0} $w={16}>
          <svg width="16" height="16"><circle cx="8" cy="8" r="7.500" fill="#f5f8fc" /><path d="M4 5v4q0 2 4 1M6 3v6M9 4v9M11.500 3v7q-3 3-6 2M3 8h9" fill="none" stroke="#2a6bc0" strokeWidth="1.300" /></svg>
        </Slot>
        <TaskTitle $ml={8} $w={156} $ls={0.1}>week02.tex - summar…</TaskTitle>
        <ActiveTask>
          <svg width="16" height="16"><path d="M1 .5h9l5 5v10H1z" fill="#f3f8fc" stroke="#1b79b5" strokeWidth="1.500" /><path d="M10 0h6v6z" fill="#1b79b5" /><path d="M4 5h7v7H4z" fill="#5fb0e0" /><path d="M7 8h4v2H7z" fill="#fff" /></svg>
          <TaskTitle $ml={8} $ls={0.08}>ExEv-Merkblatt.odt - …</TaskTitle>
        </ActiveTask>
        <Pager>
          {Array.from({ length: 16 }, (_, i) => (
            <Desk key={i} $on={i === 1} $win={[0, 1, 2, 3, 8, 9, 10].includes(i)}>
              {i === 0 && <MiniWindow $l={4} $t={3} $w={20} />}
              {i === 4 && <MiniWindow $l={1} $t={1} $w={12} />}
            </Desk>
          ))}
        </Pager>
      </TaskBar>

      <Cursor width="13" height="21" viewBox="0 0 13 21">
        <path d="M1 1v15l3.500-3 2.500 6 3-1.200-2.600-6H12z" fill="#111" stroke="#fff" />
      </Cursor>
    </Desktop>
  );
}
